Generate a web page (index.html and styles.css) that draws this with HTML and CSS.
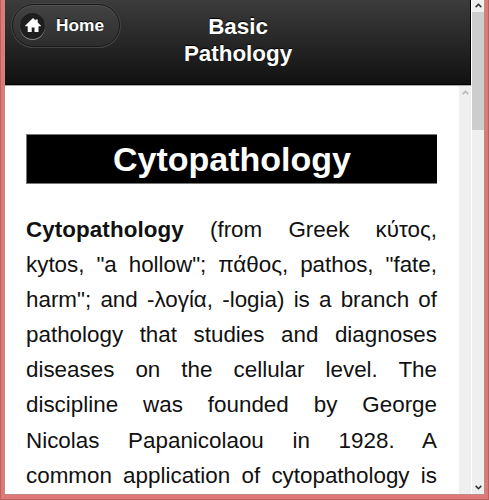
FILE: index.html
```html
<!DOCTYPE html>
<html lang="en">
<head>
  <meta charset="UTF-8" />
  <title>Basic Pathology</title>
  <link rel="stylesheet" href="styles.css">
</head>
<body>
  <div class="window">
    <div class="page">
      <header class="header">
        <a class="home-btn" href="#">
          <span class="home-icon">
            <svg width="16" height="15" viewBox="0 0 16 15">
              <path fill="#fff" d="M8 0 L10.6 2.5 V1.4 H12.7 V4.5 L16 7.7 V8.3 H13.5 V14 H9.5 V9.6 H6.7 V14 H2.7 V8.3 H0 V7.7 Z" />
            </svg>
          </span>
          <span class="home-label">Home</span>
        </a>
        <h1 class="header-title">Basic<br>Pathology</h1>
      </header>

      <div class="content">
        <main class="article">
          <h2 class="article-title">Cytopathology</h2>
          <p class="article-text"><b>Cytopathology</b> (from Greek κύτος, kytos, "a hollow"; πάθος, pathos, "fate, harm"; and -λογία, -logia) is a branch of pathology that studies and diagnoses diseases on the cellular level. The discipline was founded by George Nicolas Papanicolaou in 1928. A common application of cytopathology is</p>
        </main>
        <div class="scrollbar inner">
          <svg class="arrow" width="7" height="5" viewBox="0 0 7 5"><path d="M.7 4.1 L3.5 1.3 L6.3 4.1" /></svg>
        </div>
      </div>
    </div>

    <div class="scrollbar outer">
      <svg class="arrow" width="7" height="5" viewBox="0 0 7 5"><path d="M.7 4.1 L3.5 1.3 L6.3 4.1" /></svg>
      <div class="thumb"></div>
      <svg class="arrow down" width="7" height="5" viewBox="0 0 7 5"><path d="M.7 .9 L3.5 3.7 L6.3 .9" /></svg>
    </div>
  </div>
</body>
</html>
```
FILE: styles.css
```css
* {
  box-sizing: border-box;
}

body {
  margin: 0;
  font-family: "Liberation Sans", Arial, sans-serif;
  color: #111;
  background: #b96361;
}

/* window frame */
.window {
  display: flex;
  width: 487px;
  height: 499px;
  margin: 0 1px 1px;
  overflow: hidden;
  border: solid #df7977;
  border-width: 0 3px 4px 3px;
  background: #c08a88;
  padding: 0 1px 1px;
}

.page {
  width: 466px;
  height: 494px;
  overflow: hidden;
  background: #fff;
}

.header {
  display: flex;
  height: 85px;
  border: solid #000;
  border-width: 0 1px 1px 0;
  background: linear-gradient(#3c3c3c, #111);
  color: #fff;
  text-shadow: 0 -1px 1px #000;
}

.home-btn {
  display: flex;
  align-items: center;
  width: 108px;
  height: 43px;
  margin: 4px 0 0 7px;
  padding-left: 7px;
  border: 1px solid #1a1a1a;
  border-radius: 22px;
  background: linear-gradient(#434343, #2d2d2d);
  box-shadow: inset 0 1px 0 #505050, 0 0 0 1px #444, 0 1px 0 #5c5c5c;
  color: #fff;
  text-decoration: none;
}

.home-icon {
  display: flex;
  align-items: center;
  justify-content: center;
  width: 25px;
  height: 26px;
  border-radius: 50%;
  background: #1e1e1e;
  box-shadow: 0 1px 0 #888;
}

.home-label {
  margin-left: 11px;
  font-size: 17.3px;
  font-weight: bold;
}

.header-title {
  width: 130px;
  margin: 13px 0 0 53px;
  font-size: 22.4px;
  line-height: 27px;
  text-align: center;
}

.content {
  display: flex;
  height: 409px;
  border-top: 1px solid #aaa;
}

.article {
  width: 454px;
  padding: 48px 22px 0 21px;
}

.article-title {
  height: 50px;
  margin: 0;
  border: 1px solid #777;
  border-width: 1px 0 1px 1px;
  background: #000;
  color: #fff;
  font-size: 34px;
  line-height: 48px;
  text-align: center;
}

.article-text {
  margin: 28px 0 0;
  font-size: 22.4px;
  line-height: 35.1px;
  text-align: justify;
  text-align-last: justify;
}

.article-text b {
  letter-spacing: .08px;
}

/* scrollbars */
.scrollbar {
  display: flex;
  flex-direction: column;
  align-items: center;
  background: #efefef;
}

.scrollbar.inner {
  width: 12px;
  padding-top: 4px;
}

.scrollbar.outer {
  width: 13px;
  height: 494px;
  padding: 3px 0 4px;
  border-left: 1px solid #fff;
}

.arrow {
  flex: none;
  fill: none;
  stroke: #333;
  stroke-width: 1.6;
}

.inner .arrow {
  stroke: #b5b5b5;
}

.arrow.down {
  margin-top: auto;
}

.thumb {
  width: 12px;
  height: 118px;
  margin-top: 4px;
  background: #cdcdcd;
}
```
